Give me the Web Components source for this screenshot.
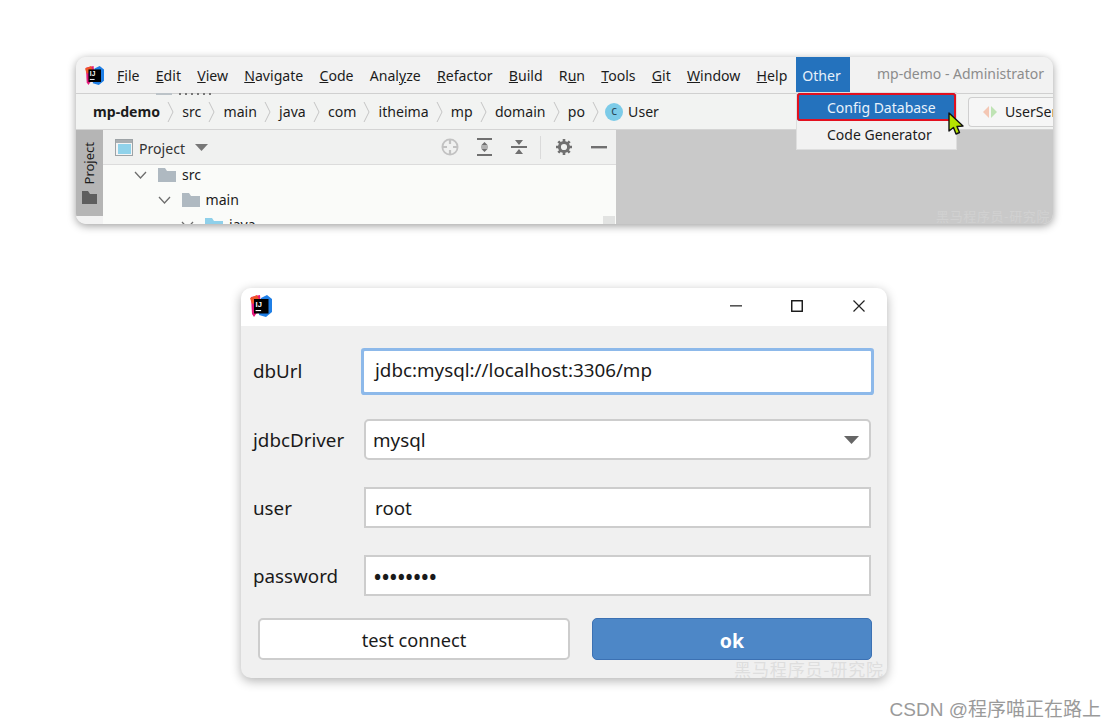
<!DOCTYPE html>
<html>
<head>
<meta charset="utf-8">
<style>
  html, body { margin: 0; background: #fff; }
  body { font-family: "Noto Sans", "Noto Sans CJK SC", sans-serif; color: #1c1c1c; width: 1117px; height: 728px; overflow: hidden; position: relative; }
</style>
</head>
<body>
<ide-window>
  <ide-menu-item slot="menu" style="margin-left:2px"><u>F</u>ile</ide-menu-item>
  <ide-menu-item slot="menu"><u>E</u>dit</ide-menu-item>
  <ide-menu-item slot="menu"><u>V</u>iew</ide-menu-item>
  <ide-menu-item slot="menu"><u>N</u>avigate</ide-menu-item>
  <ide-menu-item slot="menu"><u>C</u>ode</ide-menu-item>
  <ide-menu-item slot="menu">Anal<u>y</u>ze</ide-menu-item>
  <ide-menu-item slot="menu"><u>R</u>efactor</ide-menu-item>
  <ide-menu-item slot="menu"><u>B</u>uild</ide-menu-item>
  <ide-menu-item slot="menu">R<u>u</u>n</ide-menu-item>
  <ide-menu-item slot="menu"><u>T</u>ools</ide-menu-item>
  <ide-menu-item slot="menu"><u>G</u>it</ide-menu-item>
  <ide-menu-item slot="menu"><u>W</u>indow</ide-menu-item>
  <ide-menu-item slot="menu"><u>H</u>elp</ide-menu-item>
  <ide-crumb slot="crumbs"><b>mp-demo</b></ide-crumb>
  <ide-crumb slot="crumbs">src</ide-crumb>
  <ide-crumb slot="crumbs">main</ide-crumb>
  <ide-crumb slot="crumbs">java</ide-crumb>
  <ide-crumb slot="crumbs">com</ide-crumb>
  <ide-crumb slot="crumbs">itheima</ide-crumb>
  <ide-crumb slot="crumbs">mp</ide-crumb>
  <ide-crumb slot="crumbs">domain</ide-crumb>
  <ide-crumb slot="crumbs">po</ide-crumb>
  <tree-row slot="tree" depth="0">src</tree-row>
  <tree-row slot="tree" depth="1">main</tree-row>
  <tree-row slot="tree" depth="2" color="#8fd0ea">java</tree-row>
</ide-window>

<db-dialog>
  <form-field label="dbUrl" focused>jdbc:mysql://localhost:3306/mp</form-field>
  <form-field label="jdbcDriver" select>mysql</form-field>
  <form-field label="user">root</form-field>
  <form-field label="password" secret>••••••••</form-field>
  <dialog-button slot="buttons" style="width:312px">test connect</dialog-button>
  <dialog-button slot="buttons" primary style="width:280px">ok</dialog-button>
</db-dialog>

<page-marks></page-marks>

<script>
const logoSvg = (size) => `
  <svg width="${size}" height="${size}" viewBox="0 0 22 22" style="display:block">
    <path d="M1 2 L10 0 L11 12 L4 22 L2 19 Z" fill="#e6197c"/>
    <path d="M0 3 L7 0 L10 6 L2 9 Z" fill="#f0542a"/>
    <path d="M11 3 L17 0 L22 4 L22 17 L16 22 L9 20 Z" fill="#1f7fe6"/>
    <rect x="4" y="4" width="14.5" height="14.5" fill="#000"/>
    <text x="5.6" y="11.6" font-family="Liberation Sans" font-size="7.5" font-weight="700" fill="#fff">IJ</text>
    <rect x="5.6" y="15" width="5.5" height="1.1" fill="#fff"/>
  </svg>`;

const folderSvg = (color) => `
  <svg width="18" height="14" viewBox="0 0 18 14" style="display:block">
    <path d="M0 0 H7 L9 3 H18 V14 H0 Z" fill="${color}"/>
  </svg>`;

class IdeMenuItem extends HTMLElement {
  constructor() {
    super();
    this.attachShadow({ mode: 'open' });
    this.shadowRoot.innerHTML = `
      <style>
        :host { display: block; font-size: 14.1px; line-height: 20px; color: #1c1c1c; white-space: nowrap; }
      </style>
      <slot></slot>
    `;
  }
}

class IdeCrumb extends HTMLElement {
  constructor() {
    super();
    this.attachShadow({ mode: 'open' });
    this.shadowRoot.innerHTML = `
      <style>
        :host { display: flex; align-items: center; gap: 7px; margin-right: 8.2px; font-size: 14.1px; color: #1c1c1c; white-space: nowrap; }
        svg { display: block; }
      </style>
      <slot></slot>
      <svg width="7" height="22" viewBox="0 0 7 22"><path d="M1 1 L6 11 L1 21" fill="none" stroke="#c4c4c4" stroke-width="1"/></svg>
    `;
  }
}

class TreeRow extends HTMLElement {
  constructor() {
    super();
    this.attachShadow({ mode: 'open' });
    const depth = Number(this.getAttribute('depth') || 0);
    const color = this.getAttribute('color') || '#afb9c1';
    this.shadowRoot.innerHTML = `
      <style>
        :host { display: flex; flex: none; align-items: center; height: 25px; font-size: 14.1px; color: #1c1c1c; padding-left: ${31 + depth * 23.5}px; }
        .arrow { width: 13px; margin-right: 11px; flex: none; }
        .folder { margin-right: 6px; }
        svg { display: block; }
      </style>
      <svg class="arrow" width="13" height="8" viewBox="0 0 13 8"><path d="M1 1 L6.5 7 L12 1" fill="none" stroke="#6e6e6e" stroke-width="1.3"/></svg>
      <span class="folder">${folderSvg(color)}</span>
      <slot></slot>
    `;
  }
}

class IdeWindow extends HTMLElement {
  constructor() {
    super();
    this.attachShadow({ mode: 'open' });
    this.shadowRoot.innerHTML = `
      <style>
        :host { display: block; position: absolute; left: 76px; top: 57px; width: 977px; height: 167px; border-radius: 10px; box-shadow: 0 2px 9px rgba(0,0,0,.38); background: #f2f2f2; }
        .clip { height: 100%; border-radius: 10px; overflow: hidden; display: flex; flex-direction: column; }
        .menubar { flex: none; height: 36px; display: flex; align-items: center; padding-left: 9px; box-sizing: border-box; background: #f2f2f2; }
        .menus { display: flex; gap: 16.2px; margin-left: 11px; width: 681px; flex: none; padding-top: 1px; }
        .other { align-self: stretch; width: 54px; background: #2472bd; color: #e6f0fa; font-size: 14.1px; display: flex; align-items: center; justify-content: center; padding-top: 1px; padding-right: 3px; box-sizing: border-box; flex: none; }
        .title { margin-left: 27px; font-size: 14px; color: #8c8c8c; white-space: nowrap; padding-bottom: 3px; }
        .crumbbar { flex: none; height: 37px; box-sizing: border-box; border-top: 1px solid #d0d0d0; border-bottom: 1px solid #d4d4d4; display: flex; align-items: center; padding-left: 17px; background: #f2f3f2; position: relative; }
        .cicon { width: 18px; height: 18px; border-radius: 50%; background: #7ccbe8; color: #2b4a5a; font: 400 12px/16px "Noto Sans", sans-serif; text-align: center; margin: 0 5px 0 -2px; flex: none; }
        .user { font-size: 14.1px; }
        .tab { margin-left: auto; width: 85px; height: 30px; box-sizing: border-box; border: 1px solid #cfcfcf; border-right: 0; border-radius: 4px 0 0 4px; background: #f6f6f6; display: flex; align-items: center; padding-left: 13px; gap: 7px; font-size: 14.1px; white-space: nowrap; overflow: hidden; flex: none; }
        .tab svg { flex: none; }
        .stub { position: absolute; top: -1px; height: 2px; background: #bcc3c8; }
        .lower { flex: 1; display: flex; min-height: 0; }
        .strip { flex: none; width: 27px; display: flex; flex-direction: column; }
        .strip-on { height: 86px; background: #b5b5b5; display: flex; flex-direction: column; align-items: center; padding-top: 12px; box-sizing: border-box; }
        .strip-on span { writing-mode: vertical-rl; transform: rotate(180deg); font-size: 13px; line-height: 15px; color: #1c1c1c; }
        .strip-on svg { margin-top: 7px; }
        .strip-off { flex: 1; background: #f2f2f2; }
        .panel { flex: none; width: 513px; display: flex; flex-direction: column; background: #fafbf9; position: relative; overflow: hidden; }
        .panelhead { flex: none; height: 35px; box-sizing: border-box; border-bottom: 1px solid #dcdcdc; background: #f0f1f0; display: flex; align-items: center; padding-left: 12px; font-size: 14.1px; color: #333; position: relative; z-index: 1; margin-bottom: -3px; }
        .panelhead .name { margin-left: 6px; padding-top: 2px; }
        .caret { margin-left: 10px; }
        .tools { margin-left: auto; display: flex; align-items: center; }
        .tools svg { display: block; }
        .editor { flex: 1; background: #c9c9c9; }
        .thumb { position: absolute; right: 1px; bottom: 0; width: 12px; height: 8px; background: #e2e3e2; }
        .popup { position: absolute; left: 721px; top: 36px; width: 159px; height: 56px; box-sizing: border-box; background: #f2f2f2; box-shadow: 0 0 0 1px #dedede; }
        .popup div { height: 28px; line-height: 28px; font-size: 14px; padding-left: 30px; box-sizing: border-box; white-space: nowrap; }
        .popup .hot { background: #2472bd; color: #e9f2fb; box-shadow: inset 0 0 0 2px #e3101f; border-radius: 3px; line-height: 30px; }
        .cursor { position: absolute; left: 871px; top: 55px; display: block; }
        .wm { position: absolute; right: 3px; bottom: 0; font: 13px/16px "Noto Sans CJK SC", sans-serif; letter-spacing: .6px; color: #d1d1d1; white-space: nowrap; }
      </style>
      <div class="clip">
        <div class="menubar">
          ${logoSvg(19)}
          <div class="menus"><slot name="menu"></slot></div>
          <div class="other">Other</div>
          <div class="title">mp-demo - Administrator</div>
        </div>
        <div class="crumbbar">
          <span class="stub" style="left:80px;width:16px"></span>
          <span class="stub" style="left:103px;width:33px;background:repeating-linear-gradient(90deg,#777 0 2px,transparent 2px 6px)"></span>
          <slot name="crumbs"></slot>
          <span class="cicon">c</span><span class="user">User</span>
          <div class="tab">
            <svg width="16" height="14" viewBox="0 0 16 14"><path d="M7 1 V13 L1 7 Z" fill="#f4c7b4"/><path d="M9 1 V13 L15 7 Z" fill="#bfe3b4"/></svg>
            <span>UserSer</span>
          </div>
        </div>
        <div class="lower">
          <div class="strip">
            <div class="strip-on">
              <span>Project</span>
              <svg width="15" height="13" viewBox="0 0 15 13"><path d="M0 0 H6 L8 3 H15 V13 H0 Z" fill="#5e5e5e"/></svg>
            </div>
            <div class="strip-off"></div>
          </div>
          <div class="panel">
            <div class="panelhead">
              <svg width="18" height="17" viewBox="0 0 18 17"><rect x=".5" y=".5" width="17" height="16" fill="#f4f4f4" stroke="#9da3a6"/><rect x="1" y="1" width="16" height="3" fill="#a9aeb1"/><rect x="3" y="5" width="13" height="10" fill="#90d2ea"/></svg>
              <span class="name">Project</span>
              <svg class="caret" width="13" height="7" viewBox="0 0 13 7"><path d="M0 0 H13 L6.5 7 Z" fill="#777"/></svg>
              <div class="tools">
                <svg width="18" height="18" viewBox="0 0 18 18"><circle cx="9" cy="9" r="7.6" fill="none" stroke="#c2c2c2" stroke-width="1.8"/><path d="M9 1 V6 M9 12 V17 M1 9 H6 M12 9 H17" stroke="#c2c2c2" stroke-width="2.2"/></svg>
                <svg style="margin-left:17px" width="17" height="18" viewBox="0 0 17 18"><path d="M1 1 H16 M1 17 H16" stroke="#707070" stroke-width="2"/><path d="M8.5 4 L12 7.5 H5 Z M8.5 14 L12 10.5 H5 Z" fill="#707070"/><path d="M5 9 H12" stroke="#707070"/></svg>
                <svg style="margin-left:18px" width="16" height="18" viewBox="0 0 16 18"><path d="M0 9 H16" stroke="#707070" stroke-width="2"/><path d="M8 7 L12 2 H4 Z M8 11 L12 16 H4 Z" fill="#707070"/></svg>
                <span style="width:1px;height:23px;background:#dadada;margin:0 15px 0 13px"></span>
                <svg width="16" height="16" viewBox="0 0 16 16"><circle cx="8" cy="8" r="4.6" fill="none" stroke="#707070" stroke-width="3"/><path d="M8 0 V3 M8 13 V16 M0 8 H3 M13 8 H16 M2.3 2.3 L4.4 4.4 M11.6 11.6 L13.7 13.7 M2.3 13.7 L4.4 11.6 M11.6 4.4 L13.7 2.3" stroke="#707070" stroke-width="2.6"/></svg>
                <svg style="margin:0 9px 0 19px" width="16" height="3" viewBox="0 0 16 3"><rect width="16" height="2.4" fill="#707070"/></svg>
              </div>
            </div>
            <slot name="tree"></slot>
            <div class="thumb"></div>
          </div>
          <div class="editor"></div>
        </div>
      </div>
      <div class="popup">
        <div class="hot">Config Database</div>
        <div>Code Generator</div>
      </div>
      <svg class="cursor" width="19" height="25" viewBox="0 0 19 25"><path d="M2 1 L2 19 L6.5 15.5 L9 22 L12.5 20.5 L10 14.5 L16 14 Z" fill="#b6e400" stroke="#111" stroke-width="1.4" stroke-linejoin="round"/></svg>
      <span class="wm">黑马程序员-研究院</span>
    `;
  }
}

class FormField extends HTMLElement {
  constructor() {
    super();
    this.attachShadow({ mode: 'open' });
    const focused = this.hasAttribute('focused');
    const select = this.hasAttribute('select');
    const secret = this.hasAttribute('secret');
    this.shadowRoot.innerHTML = `
      <style>
        :host { display: flex; align-items: center; height: 41px; font-size: 18.8px; color: #1a1a1a; }
        .label { flex: none; width: 111px; padding-bottom: ${focused ? '2px' : '0'}; }
        .box { flex: 1; height: 41px; box-sizing: border-box; background: #fff; border: 2px solid #cdcdcd; display: flex; align-items: center; padding-left: ${select ? '7px' : '9px'}; padding-bottom: ${focused ? '3px' : '0'}; padding-top: ${secret ? '2px' : '0'}; border-radius: ${select ? '5px' : '0'}; }
        .box.focused { border-color: #fff; border-radius: 1px; box-shadow: 0 0 0 3px #8db9ea; }
        svg { margin-left: auto; margin-right: 10px; display: block; }
        .dots { letter-spacing: .75px; font-size: 19px; font-weight: 700; margin-left: -1px; }
      </style>
      <div class="label">${this.getAttribute('label')}</div>
      <div class="box ${focused ? 'focused' : ''}">
        <span class="${secret ? 'dots' : ''}"><slot></slot></span>
        ${select ? '<svg width="15" height="8" viewBox="0 0 15 8"><path d="M0 0 H15 L7.5 8 Z" fill="#666"/></svg>' : ''}
      </div>
    `;
  }
}

class DialogButton extends HTMLElement {
  constructor() {
    super();
    this.attachShadow({ mode: 'open' });
    const primary = this.hasAttribute('primary');
    this.shadowRoot.innerHTML = `
      <style>
        :host { display: flex; align-items: center; justify-content: center; height: 42px; box-sizing: border-box; border-radius: 5px; padding-top: 2px;
          ${primary
            ? 'background: #4d87c7; border: 1px solid #3c71b3; color: #fff; font-weight: 700; font-size: 19.5px;'
            : 'background: #fff; border: 2px solid #cdcdcd; color: #1a1a1a; font-size: 18.2px;'} }
      </style>
      <slot></slot>
    `;
  }
}

class DbDialog extends HTMLElement {
  constructor() {
    super();
    this.attachShadow({ mode: 'open' });
    this.shadowRoot.innerHTML = `
      <style>
        :host { display: block; position: absolute; left: 241px; top: 288px; width: 646px; height: 390px; border-radius: 10px; background: #f0f0f0; box-shadow: 0 3px 11px rgba(0,0,0,.3); }
        .head { height: 38px; background: #fff; border-radius: 10px 10px 0 0; display: flex; align-items: center; padding-left: 9px; padding-bottom: 2px; box-sizing: border-box; }
        .ctrls { margin-left: auto; display: flex; align-items: center; }
        .ctrls svg { display: block; }
        .fields { display: flex; flex-direction: column; gap: 27px; padding: 25px 16px 0 12px; }
        .buttons { display: flex; gap: 22px; padding: 22px 15px 0 17px; }
        .wm { position: absolute; right: 3px; bottom: -1px; font: 17px/20px "Noto Sans CJK SC", sans-serif; letter-spacing: .9px; color: #dedede; white-space: nowrap; }
      </style>
      <div class="head">
        ${logoSvg(22)}
        <div class="ctrls">
          <svg width="12" height="2" viewBox="0 0 12 2"><rect width="12" height="1.6" fill="#555"/></svg>
          <svg style="margin-left:49px" width="12" height="12" viewBox="0 0 12 12"><rect x=".75" y=".75" width="10.5" height="10.5" fill="none" stroke="#111" stroke-width="1.4"/></svg>
          <svg style="margin:0 22px 0 50px" width="12" height="12" viewBox="0 0 12 12"><path d="M.5 .5 L11.5 11.5 M11.5 .5 L.5 11.5" stroke="#222" stroke-width="1.2"/></svg>
        </div>
      </div>
      <div class="fields"><slot></slot></div>
      <div class="buttons"><slot name="buttons"></slot></div>
      <span class="wm">黑马程序员-研究院</span>
    `;
  }
}

class PageMarks extends HTMLElement {
  constructor() {
    super();
    this.attachShadow({ mode: 'open' });
    this.shadowRoot.innerHTML = `
      <style>
        :host { display: block; position: absolute; right: 16px; top: 697px; font: 19px/26px "Liberation Sans", "Noto Sans CJK SC", sans-serif; color: #9a9a9a; white-space: nowrap; }
      </style>
      CSDN @程序喵正在路上
    `;
  }
}

customElements.define('ide-menu-item', IdeMenuItem);
customElements.define('ide-crumb', IdeCrumb);
customElements.define('tree-row', TreeRow);
customElements.define('ide-window', IdeWindow);
customElements.define('form-field', FormField);
customElements.define('dialog-button', DialogButton);
customElements.define('db-dialog', DbDialog);
customElements.define('page-marks', PageMarks);
</script>
</body>
</html>
